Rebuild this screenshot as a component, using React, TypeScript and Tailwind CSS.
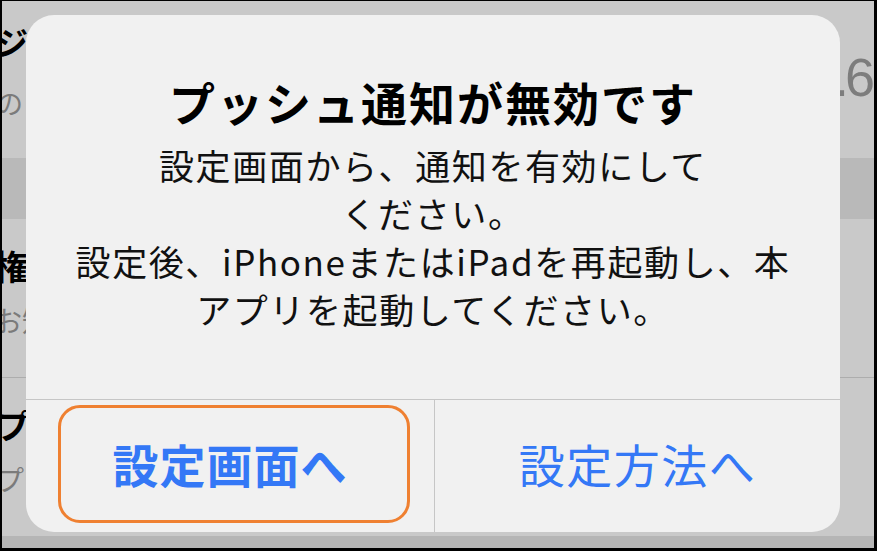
import React from "react";

export default function App() {
  return (
    <div className="relative w-[877px] h-[551px] overflow-hidden bg-[#c9c9c9] border-black border-t border-l-2 border-r-[3px] border-b-[3px] font-['Noto_Sans_CJK_JP',sans-serif]">
      {/* background list (dimmed) */}
      <div className="flex flex-col h-full">
        <div className="h-[157px] flex shrink-0">
          <div className="flex-1 -ml-[6px] pt-[23px] whitespace-nowrap">
            <div className="text-[32px] leading-[34px] font-bold text-black">ジ通知設定</div>
            <div className="mt-[30px] text-[27px] leading-[30px] text-[#7b7b7b]">のプッシュ通知</div>
          </div>
          <div className="pr-[3px] pt-[46px] text-[54px] leading-[60px] tracking-[-4px] text-[#7d7d7d] font-['Liberation_Sans',sans-serif]">1.6</div>
        </div>
        <div className="h-[61px] shrink-0 bg-[#b9b9b9]" />
        <div className="h-[159px] shrink-0 border-b border-[#adadad] -ml-[8px] pt-[30px] whitespace-nowrap">
          <div className="text-[34px] leading-[34px] font-bold text-black">権限の設定</div>
          <div className="mt-[22px] text-[28px] leading-[30px] text-[#7b7b7b]">お知らせ</div>
        </div>
        <div className="h-[158px] shrink-0 -ml-[6px] pt-[30px] whitespace-nowrap">
          <div className="text-[34px] leading-[34px] font-bold text-black">プライバシー</div>
          <div className="mt-[22px] text-[28px] leading-[30px] text-[#7b7b7b]">プライバシー</div>
        </div>
        <div className="flex-1 bg-[#b5b5b5]" />
      </div>

      {/* alert dialog */}
      <div className="absolute left-[24px] top-[14px] w-[814px] h-[517px] rounded-[28px] bg-[#f1f1f1] flex flex-col items-stretch">
        <div className="pt-[58px] text-center text-[46px] leading-[56px] font-bold tracking-[2px] text-black whitespace-nowrap">
          プッシュ通知が無効です
        </div>
        <div className="mt-[12px] flex flex-col items-center text-[35px] leading-[48px] tracking-[1.6px] text-[#111111] whitespace-nowrap">
          <div>設定画面から、通知を有効にして</div>
          <div>ください。</div>
          <div>設定後、iPhoneまたはiPadを再起動し、本</div>
          <div>アプリを起動してください。</div>
        </div>
        <div className="mt-auto h-[133px] flex border-t border-[#c6c6c6]">
          <div className="w-[408px] flex items-center justify-center pb-[5px] text-[46px] font-bold tracking-[1px] text-[#3478f6]">
            設定画面へ
          </div>
          <div className="flex-1 flex items-center justify-center pb-[5px] border-l border-[#c6c6c6] text-[46px] tracking-[1.5px] text-[#3478f6]">
            設定方法へ
          </div>
        </div>
        <div className="absolute left-[32px] top-[390px] w-[352px] h-[118px] rounded-[22px] border-[3px] border-[#ef8031]" />
      </div>
    </div>
  );
}
